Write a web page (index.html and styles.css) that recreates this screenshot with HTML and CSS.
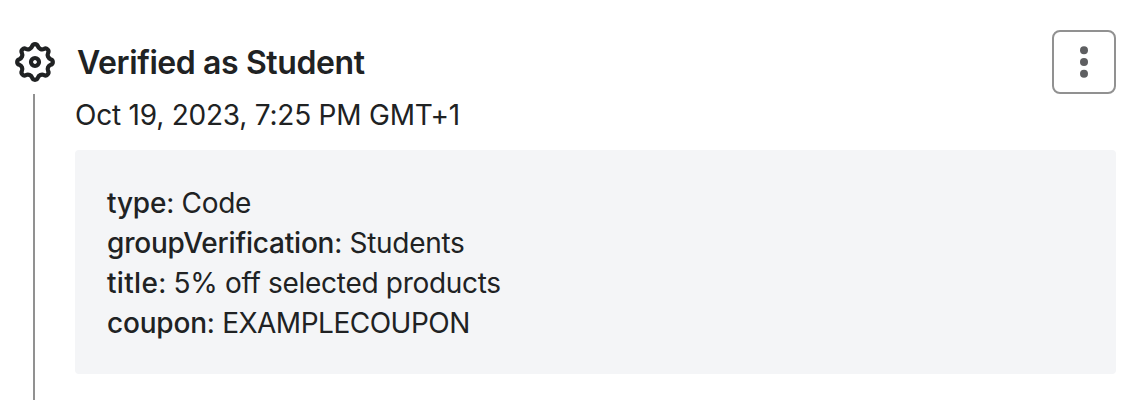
FILE: index.html
```
<!DOCTYPE html>
<html lang="en">
<head>
  <meta charset="UTF-8">
  <meta name="viewport" content="width=device-width, initial-scale=1.0">
  <title>Activity</title>
  <link rel="stylesheet" href="styles.css">
</head>
<body>
  <article class="event">
    <div class="rail">
      <svg class="gear" viewBox="-20 -20 40 40" fill="none" stroke="currentColor" stroke-width="4.2">
        <path d="M-2.86-15.72A3 3 0 0 1 2.86-15.72A4.5 4.5 0 0 0 9.09-13.14A3 3 0 0 1 13.14-9.09A4.5 4.5 0 0 0 15.72-2.86A3 3 0 0 1 15.72 2.86A4.5 4.5 0 0 0 13.14 9.09A3 3 0 0 1 9.09 13.14A4.5 4.5 0 0 0 2.86 15.72A3 3 0 0 1-2.86 15.72A4.5 4.5 0 0 0-9.09 13.14A3 3 0 0 1-13.14 9.09A4.5 4.5 0 0 0-15.72 2.86A3 3 0 0 1-15.72-2.86A4.5 4.5 0 0 0-13.14-9.09A3 3 0 0 1-9.09-13.14A4.5 4.5 0 0 0-2.86-15.72Z"/>
        <circle r="4"/>
      </svg>
      <div class="line"></div>
    </div>
    <div class="content">
      <header class="event-header">
        <div>
          <h2>Verified as Student</h2>
          <p class="date">Oct 19, 2023, 7:25 PM GMT+1</p>
        </div>
        <button class="menu" aria-label="More actions">
          <svg viewBox="0 0 8 32" fill="currentColor">
            <circle cx="4" cy="4.3" r="4"/>
            <circle cx="4" cy="16" r="4"/>
            <circle cx="4" cy="27.7" r="4"/>
          </svg>
        </button>
      </header>
      <div class="details">
        <p><b>type</b>: Code</p>
        <p><b>groupVerification</b>: Students</p>
        <p><b class="wide">title</b>: 5% off selected products</p>
        <p><b>coupon</b>: <span class="code">EXAMPLECOUPON</span></p>
      </div>
    </div>
  </article>
</body>
</html>
```
FILE: styles.css
```
* {
  box-sizing: border-box;
}
body {
  margin: 0;
  height: 400px;
  overflow: hidden;
  font-family: Inter, sans-serif;
  font-size: 28px;
  line-height: 40px;
  letter-spacing: -0.22px;
  font-feature-settings: "calt" 0;
  background: #fff;
  color: #202223;
}
h2, p {
  margin: 0;
}
.event {
  display: flex;
  height: 100%;
  padding: 30px 28px 0 15px;
}
.rail {
  display: flex;
  flex-direction: column;
  flex: 0 0 60px;
  padding-top: 12px;
}
.gear {
  width: 40px;
  height: 40px;
  overflow: visible;
}
.line {
  flex: 1;
  width: 2px;
  margin: 12px 0 0 18px;
  background: #919191;
}
.content {
  flex: 1;
}
.event-header {
  display: flex;
  justify-content: space-between;
  height: 120px;
}
h2 {
  padding: 13px 0 0 2px;
  font-size: 32px;
  font-weight: 600;
  letter-spacing: -0.4px;
}
.date {
  margin-top: 12px;
}
.menu {
  display: flex;
  align-items: center;
  justify-content: center;
  width: 64px;
  height: 64px;
  padding: 0;
  border: 2px solid #919191;
  border-radius: 8px;
  background: #fff;
  color: #5e5f61;
}
.menu svg {
  width: 8px;
  height: 32px;
}
.details {
  height: 224px;
  padding: 33px 32px 31px;
  border-radius: 4px;
  background: #f4f5f7;
  letter-spacing: -0.3px;
}
.details b {
  font-weight: 500;
  letter-spacing: -0.2px;
}
.details .wide {
  letter-spacing: 0.3px;
}
.code {
  letter-spacing: -0.5px;
}
```
